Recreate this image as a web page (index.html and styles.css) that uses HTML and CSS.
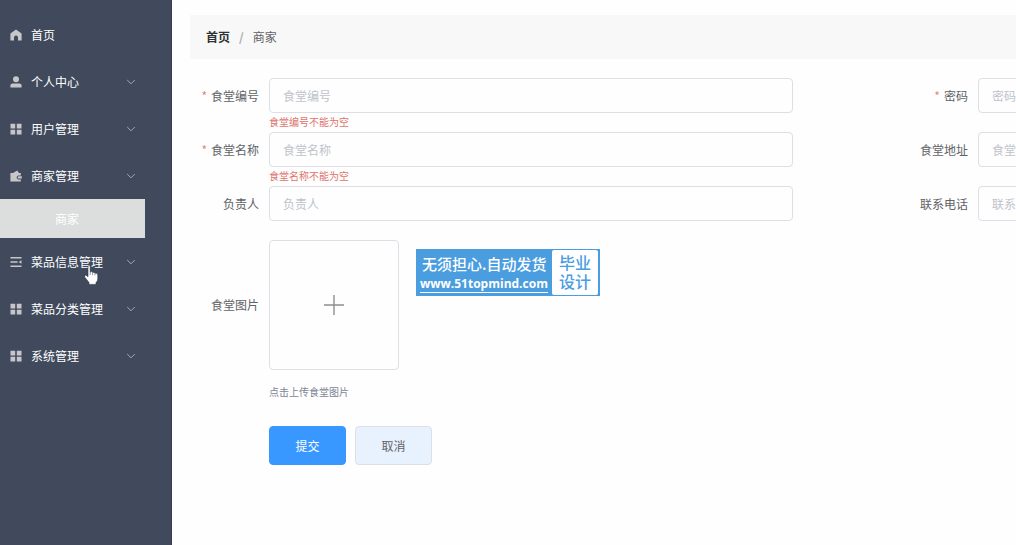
FILE: index.html
```html
<!DOCTYPE html>
<html lang="zh-CN">
<head>
    <meta charset="UTF-8">
    <meta name="viewport" content="width=device-width, initial-scale=1.0">
    <title>商家</title>
    <link rel="stylesheet" href="styles.css">
</head>
<body>
    <svg class="sprite" aria-hidden="true">
        <symbol id="icon-home" viewBox="0 0 12 12"><path d="M6 0.4 11.6 4.6V11.4H8V8.4a2 2 0 0 0-4 0v3H0.4V4.6z"/></symbol>
        <symbol id="icon-user" viewBox="0 0 12 12"><circle cx="6" cy="3.2" r="3"/><path d="M0.4 11.6V9.8Q0.4 7.6 2.6 7.6H9.4Q11.6 7.6 11.6 9.8v1.8z"/></symbol>
        <symbol id="icon-menu" viewBox="0 0 12 12"><path d="M0.5 0.8h4.7v4.6H0.5zM6.8 0.8h4.7v4.6H6.8zM0.5 6.8h4.7v4.6H0.5zM6.8 6.8h4.7v4.6H6.8z"/></symbol>
        <symbol id="icon-wallet" viewBox="0 0 12 12"><path d="M0.4 3H3L7.2 0.4 9 3H10.8V5.4H8.6a2 2 0 0 0 0 4h2.2V11.6H0.4zM8.8 6.2h3v2.4h-3a1.2 1.2 0 0 1 0-2.4z"/></symbol>
        <symbol id="icon-list" viewBox="0 0 12 12"><path d="M0.5 1h11v1.5H0.5zM0.5 5.2h7v1.5h-7zM0.5 9.5h11V11H0.5zM11.5 4.2v3.6L8.6 6z"/></symbol>
        <symbol id="icon-arrow" viewBox="0 0 10 10"><path d="M1.2 3 5 6.8 8.8 3" fill="none" stroke="currentColor"/></symbol>
    </svg>

    <div class="layout">
        <aside class="sidebar">
            <nav class="menu">
                <a class="menu-item" href="#"><svg class="icon"><use href="#icon-home"/></svg><span>首页</span></a>
                <a class="menu-item" href="#"><svg class="icon"><use href="#icon-user"/></svg><span>个人中心</span><svg class="arrow"><use href="#icon-arrow"/></svg></a>
                <a class="menu-item" href="#"><svg class="icon"><use href="#icon-menu"/></svg><span>用户管理</span><svg class="arrow"><use href="#icon-arrow"/></svg></a>
                <a class="menu-item" href="#"><svg class="icon"><use href="#icon-wallet"/></svg><span>商家管理</span><svg class="arrow"><use href="#icon-arrow"/></svg></a>
                <a class="submenu-item" href="#">商家</a>
                <a class="menu-item" href="#"><svg class="icon"><use href="#icon-list"/></svg><span>菜品信息管理</span><svg class="arrow"><use href="#icon-arrow"/></svg></a>
                <a class="menu-item" href="#"><svg class="icon"><use href="#icon-menu"/></svg><span>菜品分类管理</span><svg class="arrow"><use href="#icon-arrow"/></svg></a>
                <a class="menu-item" href="#"><svg class="icon"><use href="#icon-menu"/></svg><span>系统管理</span><svg class="arrow"><use href="#icon-arrow"/></svg></a>
            </nav>
        </aside>

        <main class="main">
            <div class="breadcrumb">
                <a href="#">首页</a><span class="separator">/</span><span>商家</span>
            </div>

            <form class="form" novalidate>
                <div class="form-grid">
                    <div class="form-item">
                        <label class="required" for="code">食堂编号</label>
                        <input type="text" id="code" placeholder="食堂编号">
                        <p class="error">食堂编号不能为空</p>
                    </div>
                    <div class="form-item">
                        <label class="required" for="password">密码</label>
                        <input type="text" id="password" placeholder="密码">
                    </div>
                    <div class="form-item">
                        <label class="required" for="name">食堂名称</label>
                        <input type="text" id="name" placeholder="食堂名称">
                        <p class="error">食堂名称不能为空</p>
                    </div>
                    <div class="form-item">
                        <label for="address">食堂地址</label>
                        <input type="text" id="address" placeholder="食堂地址">
                    </div>
                    <div class="form-item">
                        <label for="owner">负责人</label>
                        <input type="text" id="owner" placeholder="负责人">
                    </div>
                    <div class="form-item">
                        <label for="phone">联系电话</label>
                        <input type="text" id="phone" placeholder="联系电话">
                    </div>
                </div>

                <div class="form-item">
                    <label for="upload">食堂图片</label>
                    <button type="button" class="upload" id="upload">
                        <svg viewBox="0 0 20 20" width="20" height="20"><path d="M10 0v20M0 10h20" fill="none" stroke="#8c8f94" stroke-width="1.4"/></svg>
                    </button>
                    <p class="tip">点击上传食堂图片</p>
                </div>

                <div class="actions">
                    <button type="submit" class="btn btn-primary">提交</button>
                    <button type="button" class="btn btn-default">取消</button>
                </div>
            </form>
        </main>
    </div>

    <div class="promo">
        <div class="promo-text">
            <span class="promo-title">无须担心.自动发货</span>
            <a href="#">www.51topmind.com</a>
        </div>
        <div class="promo-badge">毕业<br>设计</div>
    </div>

    <svg class="cursor" viewBox="0 0 15 20"><path d="M4 1.6Q4 0.6 5 0.6T6.2 1.6V7Q8.2 6 8.6 7.4 10.4 6.8 11 8.2 13.6 7.6 13.8 10V14Q13.6 16.4 12 17.6V19.4H5V17.6L0.8 12.2Q0 10.6 1.6 10.2 2.6 10 4 11.8z" fill="#fff" stroke="#2b3342" stroke-width="0.6"/><path d="M6.2 7v3M8.6 7.6v2.6M11 8.4v2" stroke="#4a5363" stroke-width="0.6"/></svg>
</body>
</html>
```
FILE: styles.css
```css
* {
    box-sizing: border-box;
}

body {
    margin: 0;
    background: #fefefe;
    color: #606266;
    font-family: "Noto Sans CJK SC", sans-serif;
    font-size: 12px;
    line-height: 18px;
    overflow: hidden;
}

a {
    color: inherit;
    text-decoration: none;
}

p {
    margin: 0;
}

button,
input {
    font: inherit;
}

.sprite {
    position: absolute;
    width: 0;
    height: 0;
}

.layout {
    display: flex;
    min-height: 100vh;
}

/* sidebar */
.sidebar {
    flex: none;
    width: 172px;
    padding: 11px 26px 0 0;
    background: #404a5c;
    border-right: 1px solid #343c4e;
}

.menu-item {
    display: flex;
    align-items: center;
    height: 47px;
    padding: 0 9px 0 10px;
    color: #fff;
}

.icon {
    width: 12px;
    height: 12px;
    margin-right: 9px;
    fill: #c8c6c9;
}

.arrow {
    width: 10px;
    height: 10px;
    margin-left: auto;
    color: #a4a9b3;
}

.submenu-item {
    display: block;
    padding-left: 55px;
    background: #dcdddd;
    color: #fff;
    line-height: 39px;
}

/* content */
.main {
    flex: 1;
    min-width: 0;
    padding: 15px 0 0 18px;
    overflow: hidden;
}

.breadcrumb {
    display: flex;
    align-items: center;
    height: 44px;
    padding: 0 16px;
    background: #f8f8f8;
}

.breadcrumb a {
    color: #303133;
    font-weight: bold;
}

.separator {
    margin: 0 9px;
    color: #a8abb2;
    font-weight: bold;
}

.form {
    padding-top: 19px;
}

.form-grid {
    display: grid;
    grid-template-columns: 73% 73%;
    grid-auto-rows: 54px;
    column-gap: 106px;
}

.form-item {
    display: grid;
    grid-template-columns: 69px 1fr;
    column-gap: 10px;
    align-items: center;
    align-content: start;
}

.form-item label {
    text-align: right;
}

.required::before {
    content: "*";
    margin-right: 4px;
    color: #e08a84;
}

.form-item input {
    width: 100%;
    height: 35px;
    padding: 0 13px;
    border: 1px solid #dcdfe6;
    border-radius: 4px;
    background: #fefefe;
    color: #606266;
}

.form-item input::placeholder {
    color: #bfc3cb;
}

.error,
.tip {
    grid-column: 2;
    font-size: 10px;
}

.error {
    color: #e0726b;
}

.upload {
    display: flex;
    align-items: center;
    justify-content: center;
    width: 130px;
    height: 130px;
    padding: 0;
    border: 1px solid #dcdfe6;
    border-radius: 4px;
    background: #fefefe;
}

.tip {
    margin-top: 13px;
    color: #7d8594;
}

.actions {
    display: flex;
    gap: 9px;
    margin: 25px 0 0 79px;
}

.btn {
    width: 77px;
    height: 39px;
    padding: 0;
    border: 1px solid #dcdfe6;
    border-radius: 4px;
}

.btn-primary {
    border-color: #3898ff;
    background: #3898ff;
    color: #fff;
}

.btn-default {
    background: #e8f2fe;
    color: #606266;
}

/* floating banner */
.promo {
    position: absolute;
    top: 249px;
    left: 416px;
    display: flex;
    width: 184px;
    height: 47px;
    padding: 1px 2px 1px 4px;
    background: #4a9ddf;
    color: #fff;
}

.promo-text {
    flex: 1;
    display: flex;
    flex-direction: column;
    justify-content: space-between;
    padding: 4px 0 2px;
    white-space: nowrap;
}

.promo-title {
    padding-left: 2px;
    font-size: 15px;
    font-weight: 500;
    line-height: 20px;
}

.promo-text a {
    align-self: flex-start;
    border-bottom: 1px solid #fff;
    font-family: "Open Sans", sans-serif;
    font-size: 12px;
    font-weight: bold;
    line-height: 16px;
}

.promo-badge {
    width: 46px;
    padding-top: 3px;
    border-radius: 2px;
    background: #fff;
    color: #4a9ddf;
    font-size: 16px;
    font-weight: 500;
    line-height: 19px;
    text-align: center;
}

.cursor {
    position: absolute;
    top: 265px;
    left: 84px;
    width: 15px;
    height: 20px;
}
```
